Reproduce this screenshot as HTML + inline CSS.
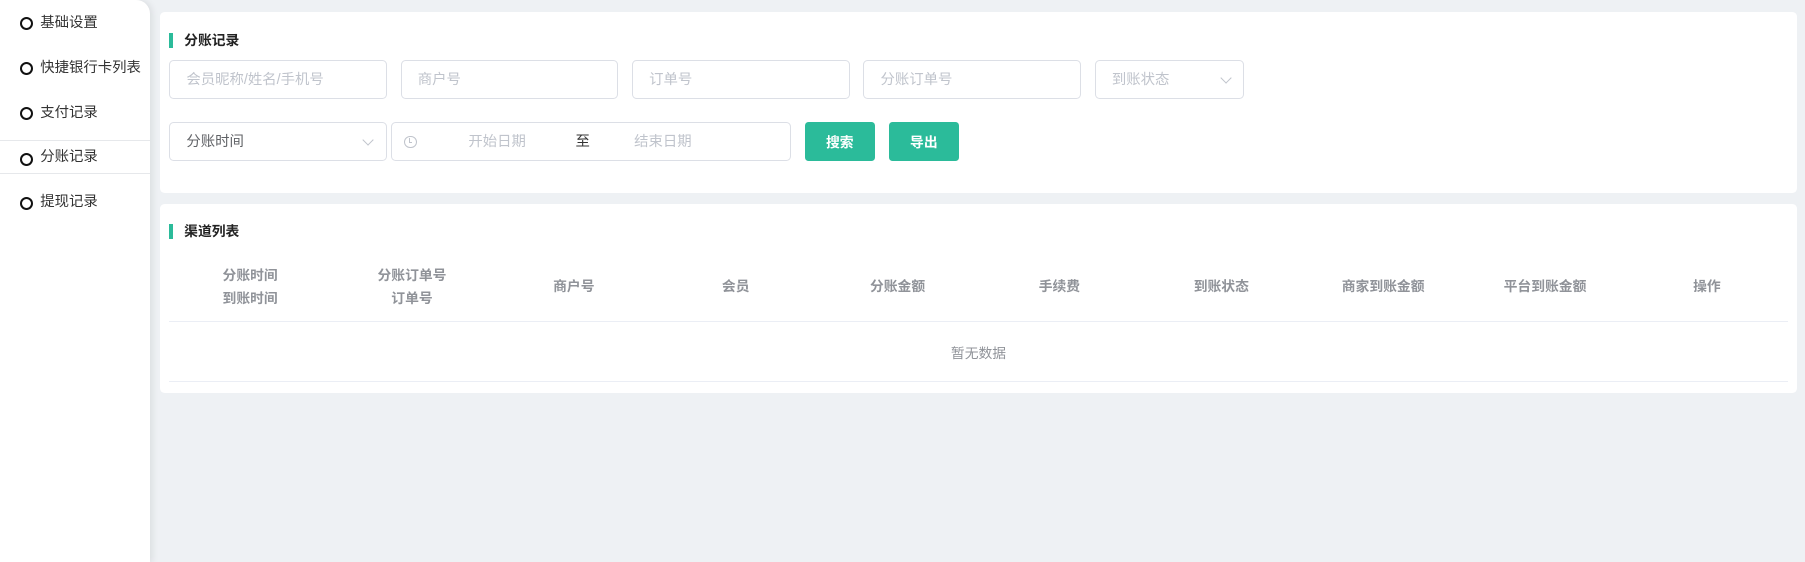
<!DOCTYPE html>
<html><head><meta charset="utf-8"><style>
*{box-sizing:border-box;margin:0;padding:0}
html,body{width:1805px;height:562px;overflow:hidden;background:#eef1f4}
#w{zoom:1.1512;width:1568px;height:489px;position:relative;font-family:"Liberation Sans","Noto Sans CJK SC",sans-serif;font-size:13px}
.side{position:absolute;left:0;top:0;width:130px;height:489px;background:#fff;border-top-right-radius:12px;box-shadow:2px 0 6px rgba(0,0,0,.08)}
.it{position:absolute;left:0;width:130px;height:29px;line-height:30px;color:#333;padding-left:35px;font-size:12.5px}
.it:before{content:"";position:absolute;left:17px;top:10px;width:8px;height:8px;border:1.8px solid #111;border-radius:50%}
.card{position:absolute;left:139px;width:1422px;background:#fff;border-radius:4px}
.tt{position:absolute;left:8px;font-size:12px;font-weight:bold;color:#222;padding-left:13px;height:13px;line-height:13px}
.tt:before{content:"";position:absolute;left:0;top:0;width:3px;height:13px;background:#2bbb9a}
.in{position:absolute;height:34px;border:1px solid #dcdfe6;border-radius:4px;color:#c0c4cc;line-height:34px;padding-left:14px;font-size:12.5px}
.ar{position:absolute;right:12px;top:11px;width:7px;height:7px;border-right:1px solid #c0c4cc;border-bottom:1px solid #c0c4cc;transform:rotate(45deg)}
.btn{position:absolute;top:106px;height:34px;width:61px;background:#2bbb9a;border-radius:3px;color:#fff;font-weight:bold;font-size:12px;text-align:center;line-height:35px}
.th{position:absolute;width:140.6px;text-align:center;color:#909399;font-weight:bold;font-size:12px;line-height:20px}
</style></head><body><div id="w">
<div class="side">
<div class="it" style="top:5px">基础设置</div>
<div class="it" style="top:44px">快捷银行卡列表</div>
<div class="it" style="top:83px">支付记录</div>
<div class="it" style="top:122px;border-top:1px solid #e6e8eb;border-bottom:1px solid #e6e8eb;line-height:28px">分账记录</div>
<div class="it" style="top:161px">提现记录</div>
</div>
<div class="card" style="top:10px;height:158px">
<div class="tt" style="top:19px">分账记录</div>
</div>
<div class="in" style="left:147px;top:52px;width:189px">会员昵称/姓名/手机号</div>
<div class="in" style="left:348px;top:52px;width:189px">商户号</div>
<div class="in" style="left:549px;top:52px;width:189px">订单号</div>
<div class="in" style="left:750px;top:52px;width:189px">分账订单号</div>
<div class="in" style="left:951px;top:52px;width:130px">到账状态<span class="ar"></span></div>
<div class="in" style="left:147px;top:106px;width:189px;color:#606266">分账时间<span class="ar" style="border-color:#c0c4cc"></span></div>
<div class="in" style="left:340px;top:106px;width:347px">
<span style="position:absolute;left:10px;top:11px;width:11px;height:11px;border:1px solid #c0c4cc;border-radius:50%"></span>
<span style="position:absolute;left:14px;top:13px;width:3px;height:4px;border-left:1px solid #c0c4cc;border-bottom:1px solid #c0c4cc"></span>
<span style="position:absolute;left:66px">开始日期</span>
<span style="position:absolute;left:159px;color:#333">至</span>
<span style="position:absolute;left:210px">结束日期</span></div>
<div class="btn" style="left:699px">搜索</div>
<div class="btn" style="left:772px">导出</div>
<div class="card" style="top:177px;height:164px"><div class="tt" style="top:18px">渠道列表</div></div>
<div style="position:absolute;left:147px;top:225px;width:1406px;height:55px;border-bottom:1px solid #ebeef5">
<div class="th" style="left:0;top:4px">分账时间<br>到账时间</div>
<div class="th" style="left:140.6px;top:4px">分账订单号<br>订单号</div>
<div class="th" style="left:281.2px;top:14px">商户号</div>
<div class="th" style="left:421.8px;top:14px">会员</div>
<div class="th" style="left:562.4px;top:14px">分账金额</div>
<div class="th" style="left:703px;top:14px">手续费</div>
<div class="th" style="left:843.6px;top:14px">到账状态</div>
<div class="th" style="left:984.2px;top:14px">商家到账金额</div>
<div class="th" style="left:1124.8px;top:14px">平台到账金额</div>
<div class="th" style="left:1265.4px;top:14px">操作</div>
</div>
<div style="position:absolute;left:147px;top:281px;width:1406px;height:51px;border-bottom:1px solid #ebeef5;text-align:center;line-height:53px;color:#909399;font-size:12px">暂无数据</div>
</div></body></html>
